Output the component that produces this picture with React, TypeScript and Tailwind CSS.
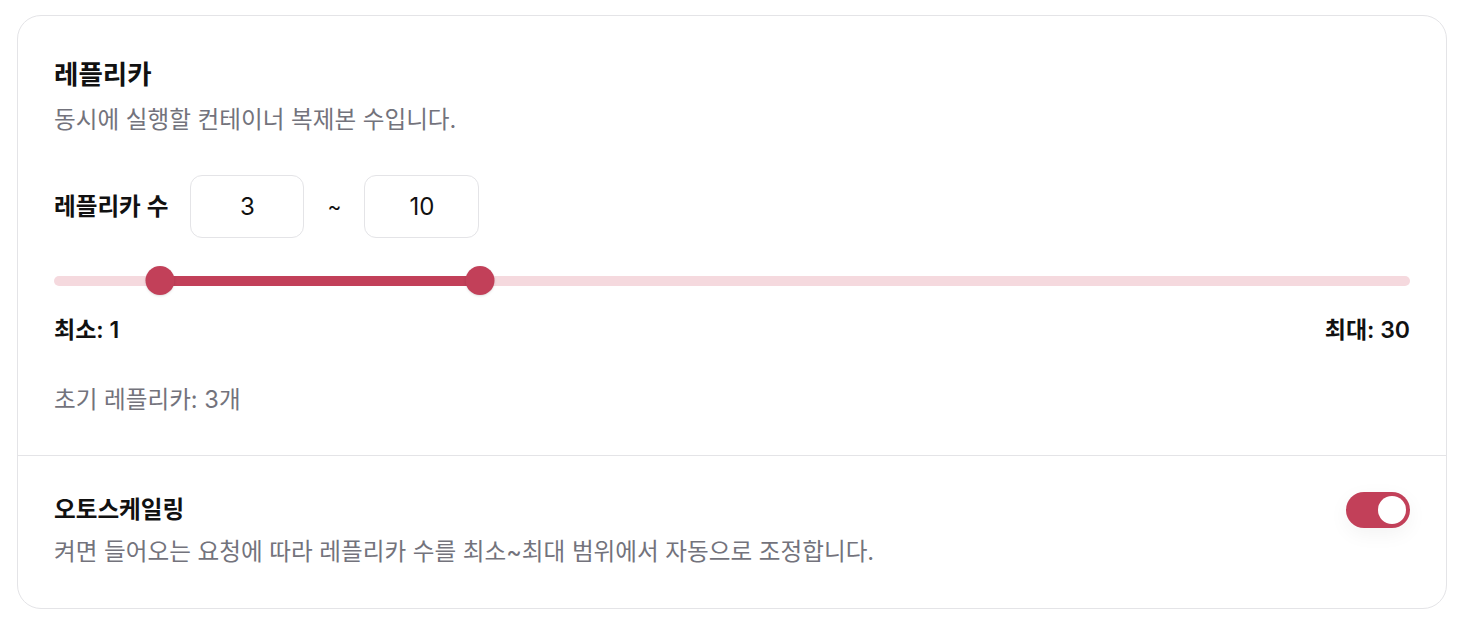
import { useState } from "react";

const MIN = 1;
const MAX = 30;

export default function App() {
  const [low] = useState(3);
  const [high] = useState(10);
  const [auto] = useState(true);

  // thumb centers run from 14.5px to (width - 14.5px)
  const pos = (v: number) => `calc(14.5px + (100% - 29px) * ${(v - MIN) / (MAX - MIN)})`;

  return (
    <div
      className="min-h-screen bg-white px-[17px] pt-[15px] text-[#111111]"
      style={{ fontFamily: 'Inter, "Noto Sans CJK KR", "Noto Sans", sans-serif' }}
    >
      <div className="rounded-[24px] border border-[#e4e4e7] bg-white">
        <section className="px-[36px] pt-[40px] pb-[38px]">
          <h2 className="text-[26.5px] font-bold leading-[36px]">레플리카</h2>
          <p className="mt-[11px] text-[23.6px] leading-[34px] text-[#73737c]">
            동시에 실행할 컨테이너 복제본 수입니다.
          </p>

          <div className="mt-[38px] flex items-center">
            <span className="text-[23.6px] font-semibold leading-[34px]">레플리카 수</span>
            <div className="ml-[22px] flex h-[63px] w-[114px] items-center justify-center rounded-[12px] border border-[#e4e4e7] text-[24px]">
              {low}
            </div>
            <span className="mx-[23px] text-[21px]">~</span>
            <div className="flex h-[63px] w-[115px] items-center justify-center rounded-[12px] border border-[#e4e4e7] text-[24px]">
              {high}
            </div>
          </div>

          <div className="relative mt-[28px] h-[29px]">
            <div className="absolute left-0 right-0 top-[9.5px] h-[10px] rounded-full bg-[#f5d9de]" />
            <div
              className="absolute top-[9.5px] h-[10px] bg-[#c24059]"
              style={{ left: pos(low), width: `calc((100% - 29px) * ${(high - low) / (MAX - MIN)})` }}
            />
            <div
              className="absolute top-0 h-[29px] w-[29px] -translate-x-1/2 rounded-full bg-[#c24059] shadow-sm"
              style={{ left: pos(low) }}
            />
            <div
              className="absolute top-0 h-[29px] w-[29px] -translate-x-1/2 rounded-full bg-[#c24059] shadow-sm"
              style={{ left: pos(high) }}
            />
          </div>

          <div className="mt-[18px] flex justify-between text-[23px] font-semibold leading-[34px]">
            <span>최소: {MIN}</span>
            <span>최대: {MAX}</span>
          </div>

          <p className="mt-[36px] text-[23.6px] leading-[34px] text-[#73737c]">초기 레플리카: {low}개</p>
        </section>

        <section className="flex items-start justify-between border-t border-[#e4e4e7] px-[36px] pt-[37px] pb-[39px]">
          <div>
            <h3 className="text-[23.6px] font-semibold leading-[34px]">오토스케일링</h3>
            <p className="mt-[8px] text-[23.6px] leading-[34px] text-[#73737c]">
              켜면 들어오는 요청에 따라 레플리카 수를 최소~최대 범위에서 자동으로 조정합니다.
            </p>
          </div>
          <button
            className={`-mt-[1px] flex h-[36px] w-[64px] items-center rounded-full px-[4px] shadow-[0_6px_20px_rgba(0,0,0,0.05)] ${
              auto ? "justify-end bg-[#c24059]" : "justify-start bg-[#e4e4e7]"
            }`}
          >
            <span className="h-[28px] w-[28px] rounded-full bg-white" />
          </button>
        </section>
      </div>
    </div>
  );
}
